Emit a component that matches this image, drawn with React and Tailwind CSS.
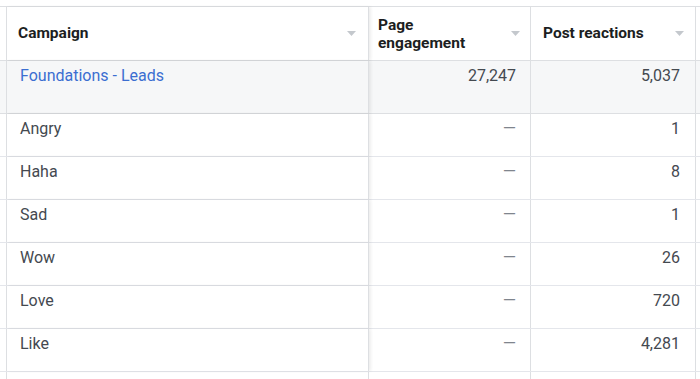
import React from "react";

const rows = [
  ["Angry", "1"],
  ["Haha", "8"],
  ["Sad", "1"],
  ["Wow", "26"],
  ["Love", "720"],
  ["Like", "4,281"],
];

function Caret() {
  return (
    <svg width="9" height="5" viewBox="0 0 9 5" className="shrink-0">
      <path d="M0 0 L9 0 L4.5 5 Z" fill="#c4c8cd" />
    </svg>
  );
}

function Dash() {
  return <span className="text-[17px] text-[#7f858d]">—</span>;
}

export default function App() {
  return (
    <div
      className="w-[700px] h-[379px] bg-white overflow-hidden pt-[6px] text-[16px]"
      style={{ fontFamily: "Roboto, 'Liberation Sans', sans-serif" }}
    >
      {/* Header */}
      <div className="flex h-[55px] border-t border-b border-[#dddfe2] pl-[6px] text-[15.5px]">
        <div className="relative z-10 w-[363px] shrink-0 flex items-center justify-between border-l border-r border-[#dddfe2] pl-[11px] pr-[12px] shadow-[2px_0_3px_rgba(0,0,0,0.07)] bg-white">
          <span className="font-bold text-[#1c1e21]">Campaign</span>
          <Caret />
        </div>
        <div className="w-[162px] shrink-0 flex items-center justify-between border-r border-[#dddfe2] pl-[9px] pr-[10px]">
          <span className="font-bold text-[#1c1e21] leading-[18px]">
            Page
            <br />
            engagement
          </span>
          <Caret />
        </div>
        <div className="w-[165px] shrink-0 flex items-center justify-between border-r border-[#dddfe2] pl-[12px] pr-[11px]">
          <span className="font-bold text-[#1c1e21]">Post reactions</span>
          <Caret />
        </div>
        <div className="flex-1" />
      </div>

      {/* Campaign row */}
      <div className="flex h-[53px] border-b border-[#dddfe2] bg-[#f6f7f8] pl-[6px] leading-[20px]">
        <div className="relative z-10 w-[363px] shrink-0 border-l border-r border-[#dddfe2] pl-[13px] pt-[5px] shadow-[2px_0_3px_rgba(0,0,0,0.07)] bg-[#f6f7f8]">
          <span className="text-[#3b6ed1]">Foundations - Leads</span>
        </div>
        <div className="w-[162px] shrink-0 border-r border-[#dddfe2] pr-[14px] pt-[5px] text-right text-[#444950]">
          27,247
        </div>
        <div className="w-[165px] shrink-0 border-r border-[#dddfe2] pr-[15px] pt-[5px] text-right text-[#444950]">
          5,037
        </div>
        <div className="flex-1" />
      </div>

      {rows.map(([name, val]) => (
        <div key={name} className="flex h-[43px] border-b border-[#e4e6eb] pl-[6px] leading-[20px]">
          <div className="relative z-10 w-[363px] shrink-0 border-l border-r border-[#dddfe2] pl-[13px] pt-[5px] shadow-[2px_0_3px_rgba(0,0,0,0.07)] bg-white text-[#444950]">
            {name}
          </div>
          <div className="w-[162px] shrink-0 border-r border-[#dddfe2] pr-[14px] pt-[4px] text-right leading-[20px]">
            <Dash />
          </div>
          <div className="w-[165px] shrink-0 border-r border-[#dddfe2] pr-[15px] pt-[5px] text-right text-[#444950]">
            {val}
          </div>
          <div className="flex-1" />
        </div>
      ))}
      <div className="flex h-[20px] pl-[6px]">
        <div className="w-[363px] shrink-0 border-l border-r border-[#dddfe2]" />
        <div className="w-[162px] shrink-0 border-r border-[#dddfe2]" />
        <div className="w-[165px] shrink-0 border-r border-[#dddfe2]" />
      </div>
    </div>
  );
}
